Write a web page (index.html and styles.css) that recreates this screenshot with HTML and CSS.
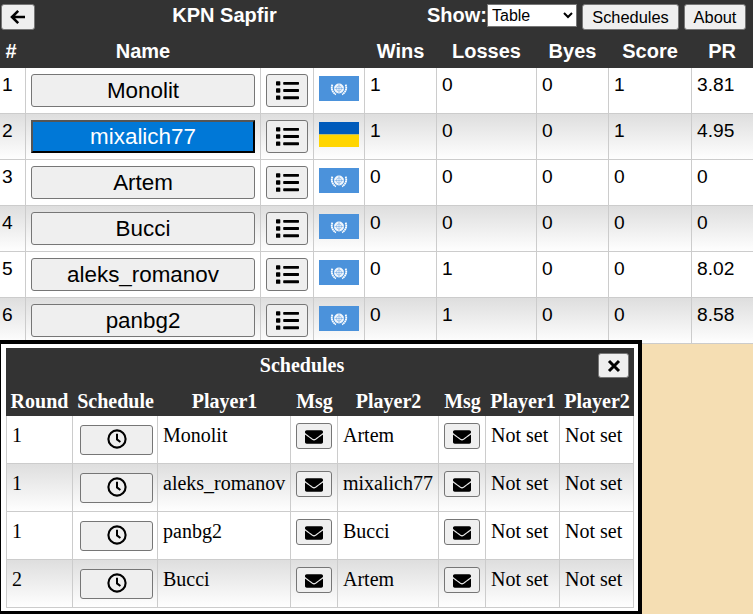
FILE: index.html
```html
<!DOCTYPE html>
<html lang="en">
<head>
<meta charset="utf-8">
<title>KPN Sapfir</title>
<link rel="stylesheet" href="styles.css">
</head>
<body>
<svg class="defs" aria-hidden="true">
  <symbol id="i-list" viewBox="0 0 512 512"><path d="M80 368H16a16 16 0 0 0-16 16v64a16 16 0 0 0 16 16h64a16 16 0 0 0 16-16v-64a16 16 0 0 0-16-16zm0-320H16A16 16 0 0 0 0 64v64a16 16 0 0 0 16 16h64a16 16 0 0 0 16-16V64a16 16 0 0 0-16-16zm0 160H16a16 16 0 0 0-16 16v64a16 16 0 0 0 16 16h64a16 16 0 0 0 16-16v-64a16 16 0 0 0-16-16zm416 176H176a16 16 0 0 0-16 16v32a16 16 0 0 0 16 16h320a16 16 0 0 0 16-16v-32a16 16 0 0 0-16-16zm0-320H176a16 16 0 0 0-16 16v32a16 16 0 0 0 16 16h320a16 16 0 0 0 16-16V80a16 16 0 0 0-16-16zm0 160H176a16 16 0 0 0-16 16v32a16 16 0 0 0 16 16h320a16 16 0 0 0 16-16v-32a16 16 0 0 0-16-16z"/></symbol>
  <symbol id="i-env" viewBox="0 0 512 512"><path d="M502.3 190.8c3.9-3.1 9.7-.2 9.7 4.7V400c0 26.5-21.5 48-48 48H48c-26.5 0-48-21.5-48-48V195.6c0-5 5.7-7.8 9.7-4.7 22.4 17.4 52.1 39.5 154.1 113.6 21.1 15.4 56.7 47.8 92.2 47.6 35.7.3 72-32.8 92.3-47.6 102-74.1 131.6-96.3 154-113.7zM256 320c23.2.4 56.6-29.2 73.4-41.4 132.7-96.3 142.8-104.7 173.4-128.7 5.8-4.5 9.2-11.5 9.2-18.9v-19c0-26.5-21.5-48-48-48H48C21.5 64 0 85.5 0 112v19c0 7.4 3.4 14.3 9.2 18.9 30.6 23.9 40.7 32.4 173.4 128.7 16.8 12.2 50.2 41.8 73.4 41.4z"/></symbol>
  <symbol id="i-clock" viewBox="0 0 20 20"><circle cx="10" cy="10" r="8.6" fill="none" stroke="#000" stroke-width="2.1"/><path d="M10 4.8v5.6l3.4 2.6" fill="none" stroke="#000" stroke-width="2"/></symbol>
  <symbol id="i-un" viewBox="0 0 40 25"><rect width="40" height="25" fill="#4b92db"/><circle cx="20" cy="12.5" r="5" fill="#fff" fill-opacity=".92"/><g fill="none" stroke="#4b92db"><circle cx="20" cy="12.5" r="2.6" stroke-width=".45"/><path d="M20 8v9M15.5 12.5h9" stroke-width=".45"/></g><path d="M13.4 8.6c-1.6 3.6-.2 7.9 3.6 9.8M26.6 8.6c1.6 3.6.2 7.9-3.6 9.8" fill="none" stroke="#fff" stroke-width="1.8" stroke-dasharray="1.7 .4"/></symbol>
  <symbol id="i-ua" viewBox="0 0 40 25"><rect width="40" height="12.5" fill="#005bbb"/><rect y="12.5" width="40" height="12.5" fill="#ffd500"/></symbol>
</svg>

<table class="standings">
  <colgroup>
    <col class="c-num"><col class="c-name"><col class="c-list"><col class="c-flag"><col class="c-wins"><col class="c-losses"><col class="c-byes"><col class="c-score"><col class="c-pr">
  </colgroup>
  <thead>
    <tr class="title-row">
      <th colspan="9">
        <div class="toolbar">
          <button class="btn btn-back" aria-label="Back">
            <svg class="ico-back" viewBox="0 0 16 16"><path d="M15 8H2.5M8.2 1.8 2 8l6.2 6.2" fill="none" stroke="#000" stroke-width="2.6"/></svg>
          </button>
          <span class="title">KPN Sapfir</span>
          <label class="show">Show:</label>
          <select class="show-select"><option>Table</option></select>
          <button class="btn btn-top btn-schedules">Schedules</button>
          <button class="btn btn-top btn-about">About</button>
        </div>
      </th>
    </tr>
    <tr class="head-row">
      <th class="head-num">#</th><th>Name</th><th></th><th></th><th>Wins</th><th>Losses</th><th>Byes</th><th>Score</th><th>PR</th>
    </tr>
  </thead>
  <tbody>
    <tr>
      <td>1</td><td><button class="btn btn-name">Monolit</button></td>
      <td><button class="btn btn-list"><svg class="ico-list"><use href="#i-list"/></svg></button></td>
      <td><svg class="flag"><use href="#i-un"/></svg></td>
      <td>1</td><td>0</td><td>0</td><td>1</td><td>3.81</td>
    </tr>
    <tr>
      <td>2</td><td><button class="btn btn-name btn-me">mixalich77</button></td>
      <td><button class="btn btn-list"><svg class="ico-list"><use href="#i-list"/></svg></button></td>
      <td><svg class="flag"><use href="#i-ua"/></svg></td>
      <td>1</td><td>0</td><td>0</td><td>1</td><td>4.95</td>
    </tr>
    <tr>
      <td>3</td><td><button class="btn btn-name">Artem</button></td>
      <td><button class="btn btn-list"><svg class="ico-list"><use href="#i-list"/></svg></button></td>
      <td><svg class="flag"><use href="#i-un"/></svg></td>
      <td>0</td><td>0</td><td>0</td><td>0</td><td>0</td>
    </tr>
    <tr>
      <td>4</td><td><button class="btn btn-name">Bucci</button></td>
      <td><button class="btn btn-list"><svg class="ico-list"><use href="#i-list"/></svg></button></td>
      <td><svg class="flag"><use href="#i-un"/></svg></td>
      <td>0</td><td>0</td><td>0</td><td>0</td><td>0</td>
    </tr>
    <tr>
      <td>5</td><td><button class="btn btn-name">aleks_romanov</button></td>
      <td><button class="btn btn-list"><svg class="ico-list"><use href="#i-list"/></svg></button></td>
      <td><svg class="flag"><use href="#i-un"/></svg></td>
      <td>0</td><td>1</td><td>0</td><td>0</td><td>8.02</td>
    </tr>
    <tr>
      <td>6</td><td><button class="btn btn-name">panbg2</button></td>
      <td><button class="btn btn-list"><svg class="ico-list"><use href="#i-list"/></svg></button></td>
      <td><svg class="flag"><use href="#i-un"/></svg></td>
      <td>0</td><td>1</td><td>0</td><td>0</td><td>8.58</td>
    </tr>
  </tbody>
</table>

<div class="dialog">
  <table class="schedules">
    <colgroup>
      <col class="s-round"><col class="s-sched"><col class="s-p1"><col class="s-msg"><col class="s-p2"><col class="s-msg"><col class="s-a"><col class="s-b">
    </colgroup>
    <thead>
      <tr class="s-title-row">
        <th colspan="8">
          <div class="s-title-wrap">
            <span class="s-title">Schedules</span>
            <button class="btn btn-close" aria-label="Close">
              <svg class="ico-close" viewBox="0 0 14 14"><path d="M2 2l10 10M12 2 2 12" fill="none" stroke="#000" stroke-width="3"/></svg>
            </button>
          </div>
        </th>
      </tr>
      <tr class="s-head-row">
        <th>Round</th><th>Schedule</th><th>Player1</th><th>Msg</th><th>Player2</th><th>Msg</th><th>Player1</th><th>Player2</th>
      </tr>
    </thead>
    <tbody>
      <tr>
        <td>1</td>
        <td class="center"><button class="btn btn-clock"><svg class="ico-clock"><use href="#i-clock"/></svg></button></td>
        <td>Monolit</td>
        <td class="center"><button class="btn btn-msg"><svg class="ico-env"><use href="#i-env"/></svg></button></td>
        <td>Artem</td>
        <td class="center"><button class="btn btn-msg"><svg class="ico-env"><use href="#i-env"/></svg></button></td>
        <td>Not set</td><td>Not set</td>
      </tr>
      <tr>
        <td>1</td>
        <td class="center"><button class="btn btn-clock"><svg class="ico-clock"><use href="#i-clock"/></svg></button></td>
        <td>aleks_romanov</td>
        <td class="center"><button class="btn btn-msg"><svg class="ico-env"><use href="#i-env"/></svg></button></td>
        <td>mixalich77</td>
        <td class="center"><button class="btn btn-msg"><svg class="ico-env"><use href="#i-env"/></svg></button></td>
        <td>Not set</td><td>Not set</td>
      </tr>
      <tr>
        <td>1</td>
        <td class="center"><button class="btn btn-clock"><svg class="ico-clock"><use href="#i-clock"/></svg></button></td>
        <td>panbg2</td>
        <td class="center"><button class="btn btn-msg"><svg class="ico-env"><use href="#i-env"/></svg></button></td>
        <td>Bucci</td>
        <td class="center"><button class="btn btn-msg"><svg class="ico-env"><use href="#i-env"/></svg></button></td>
        <td>Not set</td><td>Not set</td>
      </tr>
      <tr>
        <td>2</td>
        <td class="center"><button class="btn btn-clock"><svg class="ico-clock"><use href="#i-clock"/></svg></button></td>
        <td>Bucci</td>
        <td class="center"><button class="btn btn-msg"><svg class="ico-env"><use href="#i-env"/></svg></button></td>
        <td>Artem</td>
        <td class="center"><button class="btn btn-msg"><svg class="ico-env"><use href="#i-env"/></svg></button></td>
        <td>Not set</td><td>Not set</td>
      </tr>
    </tbody>
  </table>
</div>
</body>
</html>
```
FILE: styles.css
```css
* { box-sizing: border-box; }
html, body { margin: 0; padding: 0; height: 100%; overflow: hidden; }
body {
  background: #f5deb3;
  font-family: "Liberation Sans", Arial, sans-serif;
  font-size: 19.2px;
  color: #000;
  position: relative;
}
.defs { position: absolute; width: 0; height: 0; }

.btn {
  display: inline-flex;
  align-items: center;
  justify-content: center;
  margin: 0;
  padding: 0;
  background: #efefef;
  border: 1px solid #767676;
  border-radius: 3px;
  color: #000;
  font-family: "Liberation Sans", Arial, sans-serif;
}
svg { display: block; }

/* Standings */
table { border-spacing: 0; border-collapse: separate; table-layout: fixed; }
.standings { width: 753px; background: #fff; }
.c-num { width: 26px; }
.c-name { width: 235px; }
.c-list { width: 53px; }
.c-flag { width: 51px; }
.c-wins { width: 72px; }
.c-losses { width: 100px; }
.c-byes { width: 72px; }
.c-score { width: 83px; }
.c-pr { width: 61px; }

.standings thead { background: #333; color: #fff; }
.standings th { padding: 0; font-size: 20px; font-weight: bold; text-align: center; }
.title-row th { height: 34px; vertical-align: top; }
.head-row th { height: 34px; vertical-align: middle; padding-right: 1px; }
.standings .head-num { padding-right: 4px; }
.toolbar { display: flex; align-items: flex-start; height: 34px; padding: 4px 7px 0 1px; }
.btn-back { width: 34px; height: 26px; }
.ico-back { width: 16px; height: 16px; }
.title { width: 379px; text-align: center; line-height: 22px; }
.show { line-height: 22px; margin-left: 13px; width: 60px; text-align: left; }
.show-select {
  width: 90px; height: 23px; margin: 0 5px 0 0;
  font-family: "Liberation Sans", Arial, sans-serif; font-size: 16px;
  background: #fff; border: 1px solid #767676; border-radius: 0; padding: 0;
}
.btn-top { height: 26px; font-size: 16.4px; }
.btn-schedules { width: 97px; }
.btn-about { width: 62px; margin-left: 5px; }

.standings td {
  height: 46px;
  padding: 5px 4px 0 5px;
  vertical-align: top;
  border-right: 1px solid #ccc;
  border-bottom: 1px solid #ccc;
  line-height: 24px;
}
.standings td:first-child { padding-left: 2px; }
.standings td:last-child { border-right: 0; }
.standings tbody tr:nth-child(even) { background: linear-gradient(#dedede, #fff); }

.btn-name { width: 224px; height: 33px; font-size: 22.4px; margin-top: 1px; }
.btn-me { background: #0078d7; color: #fff; border: 2px solid #000; border-left-color: #555; border-top-color: #555; border-radius: 0; }
.btn-list { width: 42px; height: 33px; margin-top: 1px; }
.ico-list { width: 23px; height: 23px; }
.flag { width: 40px; height: 25px; margin-top: 3px; }

/* Schedules dialog */
.dialog {
  position: absolute;
  left: -3px;
  top: 340px;
  width: 645px;
  height: 275px;
  background: #fff;
  border: 4px solid #000;
  padding: 4px 4px 0 5px;
  font-family: "Liberation Serif", "Times New Roman", serif;
  font-size: 20px;
}
.schedules { width: 628px; }
.s-round { width: 67px; }
.s-sched { width: 85px; }
.s-p1 { width: 133px; }
.s-msg { width: 47px; }
.s-p2 { width: 101px; }
.s-a { width: 74px; }
.s-b { width: 74px; }
.schedules thead { background: #333; color: #fff; }
.schedules th { padding: 0; font-weight: bold; text-align: center; }
.s-title-row th { height: 36px; }
.s-title-wrap { position: relative; height: 36px; line-height: 34px; padding-right: 36px; }
.btn-close { position: absolute; right: 5px; top: 5px; width: 31px; height: 25px; }
.ico-close { width: 14px; height: 14px; }
.s-head-row th { height: 32px; vertical-align: middle; padding-top: 3px; }
.schedules td {
  height: 48px;
  padding: 7px 4px 0 5px;
  vertical-align: top;
  border-right: 1px solid #ccc;
  border-bottom: 1px solid #ccc;
  line-height: 24px;
}
.schedules td:first-child { border-left: 1px solid #ccc; }
.schedules tbody tr:nth-child(even) { background: linear-gradient(#dedede, #fff); }
.schedules td.center { padding: 6px 0 0; text-align: center; }
.btn-clock { width: 73px; height: 30px; margin: 3px 0 0 2px; padding-left: 2px; vertical-align: top; }
.btn-msg { width: 36px; height: 26px; margin-top: 1px; vertical-align: top; }
.ico-clock { width: 20px; height: 20px; margin-bottom: 3px; }
.ico-env { width: 18px; height: 18px; margin-top: 1px; }
```
